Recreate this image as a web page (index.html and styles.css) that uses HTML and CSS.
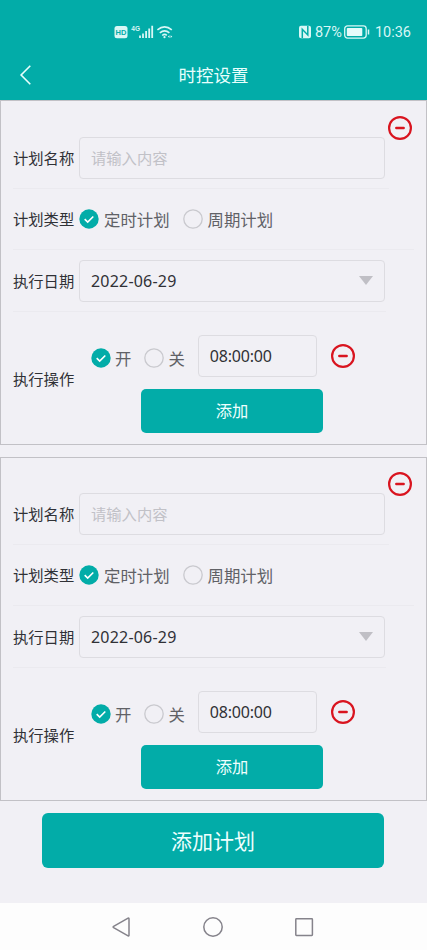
FILE: index.html
```html
<!DOCTYPE html>
<html lang="zh-CN">
<head>
<meta charset="utf-8">
<meta name="viewport" content="width=device-width, initial-scale=1">
<title>时控设置</title>
<link rel="stylesheet" href="styles.css">
</head>
<body>
<svg class="defs" width="0" height="0" aria-hidden="true">
  <symbol id="on" viewBox="0 0 20 20"><circle cx="10" cy="10" r="9.7" fill="#02aca8"/><path d="M5.7 10.1l3 3 5.6-5.6" fill="none" stroke="#fff" stroke-width="1.6"/></symbol>
  <symbol id="off" viewBox="0 0 20 20"><circle cx="10" cy="10" r="9.2" fill="none" stroke="#c9c9ce" stroke-width="1.3"/></symbol>
  <symbol id="minus" viewBox="0 0 26 26"><circle cx="13" cy="13" r="10.9" fill="none" stroke="#d9141f" stroke-width="2.2"/><path d="M9.3 13h7.4" stroke="#d9141f" stroke-width="2.4" stroke-linecap="round"/></symbol>
</svg>
<header class="header">
  <div class="status">
    <div class="status-left">
      <svg width="62" height="18" viewBox="0 0 62 18">
        <rect x="1.5" y="3" width="13" height="12.2" rx="2.5" fill="#d9f7f6"/>
        <text class="hd" x="8" y="12" text-anchor="middle">HD</text>
        <text class="net" x="18.3" y="8">4G</text>
        <path d="M27 12.5v2.5M30 10.5V15M33.1 8v7M36.2 5.5V15M39.2 2.8V15" stroke="#d9f7f6" stroke-width="1.8"/>
        <path d="M44.4 6.9q7.2-6.2 14.4 0M46.8 9.8q4.8-4 9.6 0M49.2 12.5q2.4-2 4.6-.2" fill="none" stroke="#d9f7f6" stroke-width="1.6"/>
        <circle cx="51.5" cy="14.2" r="1.1" fill="#d9f7f6"/>
        <path d="M54.8 13.6l1.7-1.3v2.6zM59.3 13.6l-1.7-1.3v2.6z" fill="#d9f7f6"/>
      </svg>
    </div>
    <div class="status-right">
      <svg width="14" height="14" viewBox="0 0 14 14">
        <path d="M3 .8H11q2 0 2 2v8.4q0 2-2 2H3q-2 0-2-2V2.8q0-2 2-2z" fill="#d9f7f6"/>
        <path d="M4.3 13V4.3L9.8 10V1" fill="none" stroke="#02aca8" stroke-width="1.5"/>
      </svg>
      <span class="percent">87%</span>
      <svg class="battery" width="26" height="14" viewBox="0 0 26 14">
        <rect x=".7" y=".9" width="21.5" height="12.2" rx="2.8" fill="none" stroke="#d9f7f6" stroke-width="1.3"/>
        <rect x="2.8" y="3" width="15.5" height="8" rx=".8" fill="#e5fbfa"/>
        <path d="M24.5 4.5v5" stroke="#d9f7f6" stroke-width="1.5"/>
      </svg>
      <span class="clock">10:36</span>
    </div>
  </div>
  <div class="titlebar">
    <svg class="back" width="14" height="22" viewBox="0 0 14 22"><path d="M11.3 1.7L2.1 11l9.2 9.3" fill="none" stroke="#e8fffd" stroke-width="1.6"/></svg>
    <h1 class="title">时控设置</h1>
  </div>
</header>
<main class="content">
  <section class="card">
    <svg class="minus remove-plan"><use href="#minus"/></svg>
    <div class="row name"><span class="label">计划名称</span><div class="field placeholder">请输入内容</div></div>
    <div class="row type"><span class="label">计划类型</span>
      <span class="radio"><svg><use href="#on"/></svg>定时计划</span>
      <span class="radio"><svg><use href="#off"/></svg>周期计划</span></div>
    <div class="row date"><span class="label">执行日期</span><div class="field"><span>2022-06-29</span><i class="caret"></i></div></div>
    <div class="row action"><span class="label">执行操作</span>
      <div class="actions">
        <div class="schedule">
          <span class="radio"><svg><use href="#on"/></svg>开</span>
          <span class="radio"><svg><use href="#off"/></svg>关</span>
          <div class="field time">08:00:00</div>
          <svg class="minus"><use href="#minus"/></svg>
        </div>
        <div class="button add">添加</div>
      </div></div>
  </section>
  <section class="card">
    <svg class="minus remove-plan"><use href="#minus"/></svg>
    <div class="row name"><span class="label">计划名称</span><div class="field placeholder">请输入内容</div></div>
    <div class="row type"><span class="label">计划类型</span>
      <span class="radio"><svg><use href="#on"/></svg>定时计划</span>
      <span class="radio"><svg><use href="#off"/></svg>周期计划</span></div>
    <div class="row date"><span class="label">执行日期</span><div class="field"><span>2022-06-29</span><i class="caret"></i></div></div>
    <div class="row action"><span class="label">执行操作</span>
      <div class="actions">
        <div class="schedule">
          <span class="radio"><svg><use href="#on"/></svg>开</span>
          <span class="radio"><svg><use href="#off"/></svg>关</span>
          <div class="field time">08:00:00</div>
          <svg class="minus"><use href="#minus"/></svg>
        </div>
        <div class="button add">添加</div>
      </div></div>
  </section>
  <div class="button add-plan">添加计划</div>
</main>
<nav class="navbar">
  <svg width="22" height="22" viewBox="0 0 22 22"><path d="M18 2.7v16.6q0 1-.9.5L2.6 11.6q-.9-.6 0-1.2L17.1 2.2q.9-.5.9.5z"/></svg>
  <svg width="22" height="22" viewBox="0 0 22 22"><circle cx="11" cy="11" r="9.2"/></svg>
  <svg width="22" height="22" viewBox="0 0 22 22"><rect x="2.8" y="2.8" width="16.6" height="16.6" rx=".6"/></svg>
</nav>
</body>
</html>
```
FILE: styles.css
```css
* { box-sizing: border-box; }
body {
  margin: 0;
  height: 950px;
  display: flex;
  flex-direction: column;
  background: #f1f0f5;
  color: #303136;
  font-family: "Noto Sans CJK SC", sans-serif;
  overflow: hidden;
}
svg { display: block; flex: none; }
.defs { position: absolute; }
.header { height: 100px; flex: none; background: #02aca8; color: #e8fffd; }
.status {
  height: 50px;
  padding: 14px 16px 0 113px;
  display: flex;
  align-items: center;
  justify-content: space-between;
}
.status-right { display: flex; align-items: center; font: 14.5px/18px Roboto, sans-serif; color: #d9f7f6; }
.hd { font: bold 7.5px "Liberation Sans", sans-serif; fill: #02aca8; }
.net { font: bold 6.5px "Liberation Sans", sans-serif; fill: #d9f7f6; }
.percent { margin-left: 3px; padding-top: 1px; }
.clock { padding-top: 1px; }
.battery { margin: 0 5px 0 2px; }
.titlebar { height: 50px; display: flex; align-items: center; padding-left: 19px; }
.title {
  flex: 1;
  margin: 0 33px 0 0;
  text-align: center;
  font-size: 17.5px;
  line-height: 26px;
  font-weight: 400;
}
.content { flex: 1; }
.card {
  position: relative;
  height: 345px;
  margin-bottom: 12px;
  padding: 26px 12px 0;
  border: 1px solid #c2c1c6;
}
.card + .card { height: 344px; padding-top: 25px; }
.minus { width: 26px; height: 26px; }
.remove-plan { position: absolute; top: 14px; right: 13px; }
.card + .card .remove-plan { top: 13px; }
.row { display: flex; align-items: center; border-bottom: 1px solid #ebeaef; }
.label { width: 66px; flex: none; font-size: 15.3px; line-height: 24px; padding-bottom: 2px; white-space: nowrap; }
.name { height: 62px; width: 376px; }
.type { height: 61px; }
.date { height: 62px; width: 373px; }
.action { height: 132px; border: 0; align-items: flex-start; }
.action .label { padding-top: 54px; }
.field {
  width: 306px;
  height: 42px;
  padding: 0 11px;
  display: flex;
  align-items: center;
  justify-content: space-between;
  border: 1px solid #dddce1;
  border-radius: 4px;
  font: 16px/24px "Noto Sans", "Noto Sans CJK SC", sans-serif;
  letter-spacing: .2px;
}
.placeholder { color: #c1c1c7; font-size: 15.3px; letter-spacing: 0; }
.caret { border: 7px solid transparent; border-top: 9px solid #c0bfc5; border-bottom: 0; }
.radio { display: flex; align-items: center; font-size: 16.4px; line-height: 24px; color: #606166; }
.radio svg { width: 20px; height: 20px; margin-right: 5px; }
.type .radio { margin-right: 13px; }
.actions { flex: 1; padding-top: 23px; }
.schedule { display: flex; align-items: center; padding-left: 12px; }
.schedule .radio { margin-right: 13px; padding-top: 3px; }
.schedule .radio svg { margin-right: 4px; }
.schedule .time { width: 119px; margin-right: 13px; letter-spacing: -.2px; }
.button {
  display: flex;
  align-items: center;
  justify-content: center;
  background: #02aca8;
  color: #effffe;
}
.add { width: 182px; height: 44px; margin: 12px 0 0 62px; padding-bottom: 2px; border-radius: 5px; font-size: 16.3px; }
.add-plan { width: 342px; height: 55px; margin: 0 0 0 42px; padding-bottom: 2px; border-radius: 6px; font-size: 21px; }
.navbar {
  height: 47px;
  flex: none;
  background: #fdfdfd;
  display: flex;
  justify-content: center;
  gap: 69px;
  padding: 13px 1px 0 0;
}
.navbar svg { fill: none; stroke: #85838b; stroke-width: 1.5; }
```
